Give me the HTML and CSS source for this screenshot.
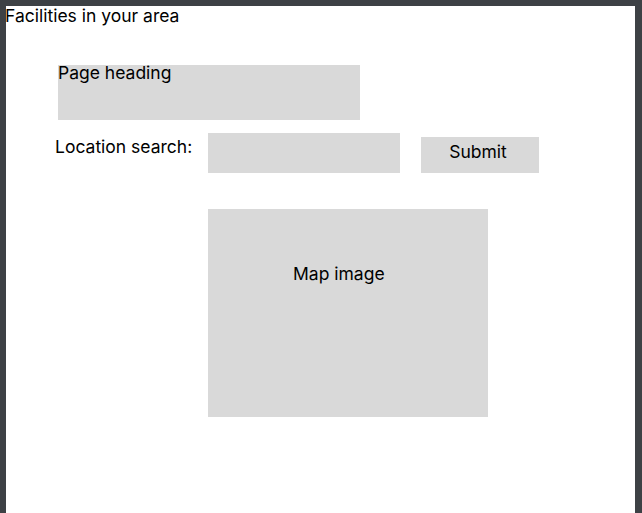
FILE: index.html
```html
<!DOCTYPE html>
<html lang="en">
<head>
<meta charset="utf-8">
<title>Facilities in your area</title>
<link rel="stylesheet" href="styles.css">
</head>
<body>
<main class="page">
  <h1 class="title">Facilities in your area</h1>
  <div class="heading-box">Page heading</div>
  <form class="search-row" onsubmit="return false">
    <label class="search-label" for="loc">Location search:</label>
    <div class="search-input" id="loc"></div>
    <div class="submit-btn">Submit</div>
  </form>
  <div class="map-box">Map image</div>
</main>
</body>
</html>
```
FILE: styles.css
```css
html {
  background: #3d4145;
}
body {
  margin: 0;
  padding: 6px 7px 0 6px;
  font-family: "Inter", "Liberation Sans", sans-serif;
  font-size: 17.5px;
  color: #000;
}
.page {
  background: #fff;
  min-height: 507px;
  overflow: hidden;
}
.title {
  margin: 0 0 0 -1px;
  font-size: 17.5px;
  font-weight: 400;
  line-height: 20px;
}
.heading-box {
  margin: 39px 0 0 52px;
  width: 302px;
  height: 55px;
  background: #d9d9d9;
  line-height: 16px;
}
.search-row {
  display: flex;
  align-items: flex-start;
  margin: 13px 0 0 49px;
}
.search-label {
  width: 153px;
  margin-top: 4px;
  line-height: 20px;
}
.search-input {
  width: 192px;
  height: 40px;
  background: #d9d9d9;
}
.submit-btn {
  margin: 4px 0 0 21px;
  width: 118px;
  height: 36px;
  box-sizing: border-box;
  padding: 5px 4px 0 0;
  background: #d9d9d9;
  text-align: center;
  line-height: 20px;
}
.map-box {
  margin: 36px 0 0 202px;
  width: 280px;
  height: 208px;
  box-sizing: border-box;
  padding: 55px 0 0 85px;
  background: #d9d9d9;
  line-height: 20px;
}
```
